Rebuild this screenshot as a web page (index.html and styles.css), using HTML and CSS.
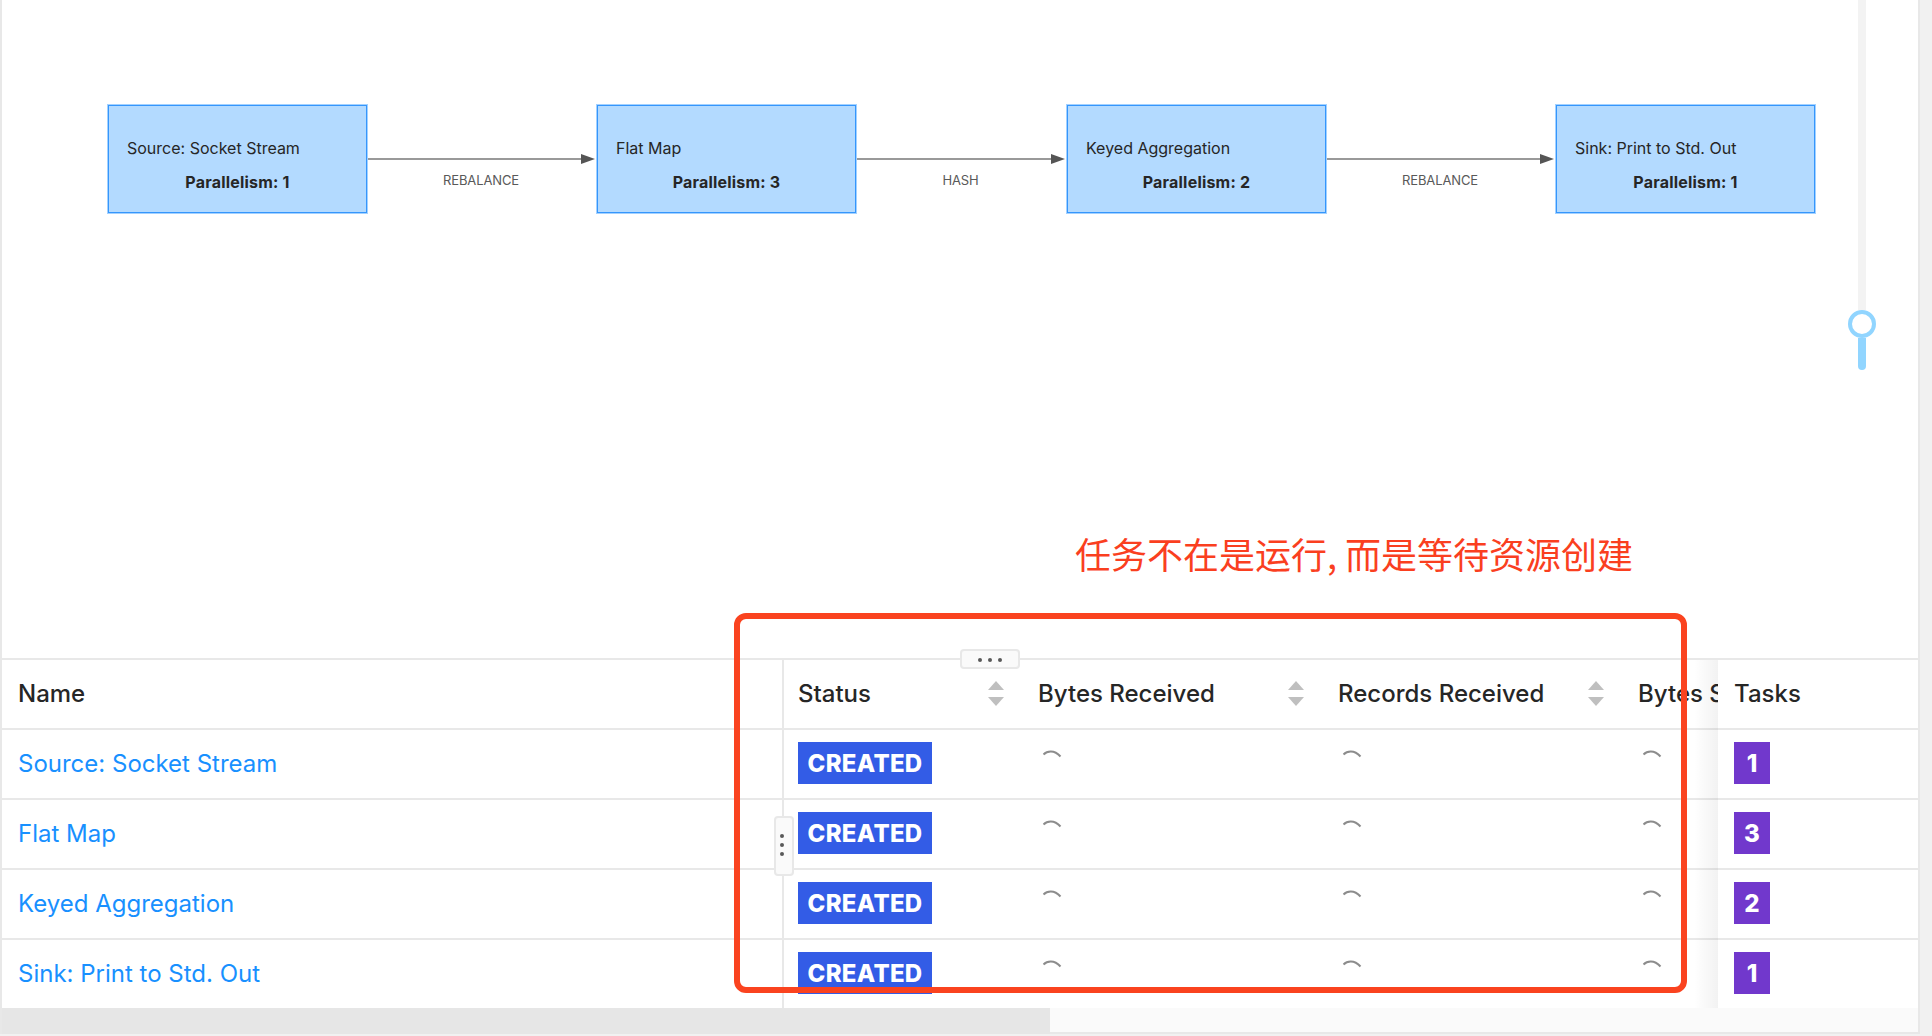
FILE: index.html
```html
<!DOCTYPE html>
<html lang="zh-CN">
<head>
    <meta charset="UTF-8">
    <meta name="viewport" content="width=device-width, initial-scale=1.0">
    <title>Job Overview</title>
    <link rel="stylesheet" href="styles.css">
</head>
<body>
    <div class="panel">
        <div class="graph">
            <div class="node">
                <div class="node-name">Source: Socket Stream</div>
                <div class="node-par">Parallelism: 1</div>
            </div>
            <div class="edge edge-wide">
                <div class="edge-line"><span class="line"></span><span class="arrow"></span></div>
                <div class="edge-label">REBALANCE</div>
            </div>
            <div class="node">
                <div class="node-name">Flat Map</div>
                <div class="node-par">Parallelism: 3</div>
            </div>
            <div class="edge edge-narrow">
                <div class="edge-line"><span class="line"></span><span class="arrow"></span></div>
                <div class="edge-label">HASH</div>
            </div>
            <div class="node">
                <div class="node-name">Keyed Aggregation</div>
                <div class="node-par">Parallelism: 2</div>
            </div>
            <div class="edge edge-wide">
                <div class="edge-line"><span class="line"></span><span class="arrow"></span></div>
                <div class="edge-label">REBALANCE</div>
            </div>
            <div class="node">
                <div class="node-name">Sink: Print to Std. Out</div>
                <div class="node-par">Parallelism: 1</div>
            </div>
        </div>

        <div class="table">
            <div class="row row-head">
                <div class="cell cell-name">Name</div>
                <div class="cell cell-sort">Status<span class="sort"><i class="up"></i><i class="down"></i></span></div>
                <div class="cell cell-sort">Bytes Received<span class="sort"><i class="up"></i><i class="down"></i></span></div>
                <div class="cell cell-sort">Records Received<span class="sort"><i class="up"></i><i class="down"></i></span></div>
                <div class="cell cell-clip">Bytes Sent</div>
                <div class="cell cell-tasks">Tasks</div>
            </div>
            <div class="row">
                <div class="cell cell-name"><a class="link">Source: Socket Stream</a></div>
                <div class="cell cell-badge"><span class="badge-status">CREATED</span></div>
                <div class="cell cell-spin"><svg class="spinner" viewBox="0 0 18 8"><path d="M.5 4.5C4 1 11-.5 17.5 6.5"/></svg></div>
                <div class="cell cell-spin"><svg class="spinner" viewBox="0 0 18 8"><path d="M.5 4.5C4 1 11-.5 17.5 6.5"/></svg></div>
                <div class="cell cell-spin"><svg class="spinner" viewBox="0 0 18 8"><path d="M.5 4.5C4 1 11-.5 17.5 6.5"/></svg></div>
                <div class="cell cell-tasks cell-badge"><span class="badge-tasks">1</span></div>
            </div>
            <div class="row">
                <div class="cell cell-name"><a class="link">Flat Map</a></div>
                <div class="cell cell-badge"><span class="badge-status">CREATED</span></div>
                <div class="cell cell-spin"><svg class="spinner" viewBox="0 0 18 8"><path d="M.5 4.5C4 1 11-.5 17.5 6.5"/></svg></div>
                <div class="cell cell-spin"><svg class="spinner" viewBox="0 0 18 8"><path d="M.5 4.5C4 1 11-.5 17.5 6.5"/></svg></div>
                <div class="cell cell-spin"><svg class="spinner" viewBox="0 0 18 8"><path d="M.5 4.5C4 1 11-.5 17.5 6.5"/></svg></div>
                <div class="cell cell-tasks cell-badge"><span class="badge-tasks">3</span></div>
            </div>
            <div class="row">
                <div class="cell cell-name"><a class="link">Keyed Aggregation</a></div>
                <div class="cell cell-badge"><span class="badge-status">CREATED</span></div>
                <div class="cell cell-spin"><svg class="spinner" viewBox="0 0 18 8"><path d="M.5 4.5C4 1 11-.5 17.5 6.5"/></svg></div>
                <div class="cell cell-spin"><svg class="spinner" viewBox="0 0 18 8"><path d="M.5 4.5C4 1 11-.5 17.5 6.5"/></svg></div>
                <div class="cell cell-spin"><svg class="spinner" viewBox="0 0 18 8"><path d="M.5 4.5C4 1 11-.5 17.5 6.5"/></svg></div>
                <div class="cell cell-tasks cell-badge"><span class="badge-tasks">2</span></div>
            </div>
            <div class="row row-last">
                <div class="cell cell-name"><a class="link">Sink: Print to Std. Out</a></div>
                <div class="cell cell-badge"><span class="badge-status">CREATED</span></div>
                <div class="cell cell-spin"><svg class="spinner" viewBox="0 0 18 8"><path d="M.5 4.5C4 1 11-.5 17.5 6.5"/></svg></div>
                <div class="cell cell-spin"><svg class="spinner" viewBox="0 0 18 8"><path d="M.5 4.5C4 1 11-.5 17.5 6.5"/></svg></div>
                <div class="cell cell-spin"><svg class="spinner" viewBox="0 0 18 8"><path d="M.5 4.5C4 1 11-.5 17.5 6.5"/></svg></div>
                <div class="cell cell-tasks cell-badge"><span class="badge-tasks">1</span></div>
            </div>
        </div>

        <div class="scrollbar"><div class="scrollbar-thumb"></div></div>

        <!-- things that sit on top of the page -->
        <div class="slider">
            <div class="slider-track"></div>
            <div class="slider-handle"></div>
            <div class="slider-rail"></div>
        </div>
        <div class="handle-h"><i></i><i></i><i></i></div>
        <div class="handle-v"><i></i><i></i><i></i></div>
        <div class="note">任务不在是运行, 而是等待资源创建</div>
        <div class="red-box"></div>
    </div>
</body>
</html>
```

FILE: styles.css
```css
html, body {
    margin: 0;
    padding: 0;
    height: 100%;
    overflow: hidden;
}

body {
    font-family: Inter, "Noto Sans CJK SC", sans-serif;
    background-color: #f1f1f1;
    color: #262626;
}

.panel {
    position: relative;
    box-sizing: border-box;
    width: 1920px;
    height: 1034px;
    background: #fff;
    border-left: 2px solid #e8e8e8;
    border-right: 2px solid #e8e8e8;
    border-bottom: 2px solid #e8e8e8;
}

/* job graph */
.graph {
    box-sizing: border-box;
    height: 658px;
    padding: 104px 0 0 105px;
    display: flex;
    align-items: flex-start;
}

.node {
    box-sizing: border-box;
    width: 261px;
    height: 110px;
    flex: none;
    padding: 33px 19px 0;
    background: #b3daff;
    border: 1px solid #a3d1ff;
    box-shadow: inset 0 0 0 1px #3596fc;
    font-size: 16px;
    line-height: 20px;
    color: #262626;
}

.node-par {
    margin-top: 14px;
    text-align: center;
    font-weight: 700;
    letter-spacing: 0.2px;
}

.edge {
    flex: none;
    padding-top: 50px;
}

.edge-wide {
    width: 228px;
}

.edge-narrow {
    width: 209px;
}

.edge-line {
    display: flex;
    align-items: center;
    height: 10px;
}

.line {
    flex: 1;
    height: 2px;
    background: #999;
}

.arrow {
    width: 0;
    height: 0;
    margin-right: 1px;
    border-left: 14px solid #555;
    border-top: 5px solid transparent;
    border-bottom: 5px solid transparent;
}

.edge-label {
    margin-top: 7px;
    padding-right: 2px;
    text-align: center;
    font-size: 13px;
    line-height: 18px;
    letter-spacing: -0.1px;
    color: #595959;
}

/* table */
.row {
    box-sizing: border-box;
    display: grid;
    grid-template-columns: 782px 240px 300px 300px 94px 200px;
    height: 70px;
    border-bottom: 2px solid #e8e8e8;
}

.row-head {
    height: 72px;
    border-top: 2px solid #e8e8e8;
    font-size: 24px;
    font-weight: 500;
    color: #262626;
}

.row-last {
    height: 68px;
    border-bottom: none;
}

.cell {
    box-sizing: border-box;
    display: flex;
    align-items: center;
    padding-left: 14px;
    min-width: 0;
}

.cell-name {
    padding-left: 16px;
    padding-bottom: 2px;
    border-right: 2px solid #e8e8e8;
}

.row-head .cell {
    padding-bottom: 2px;
}

.cell-sort {
    justify-content: space-between;
    padding-right: 20px;
}

.cell-clip {
    overflow: hidden;
    white-space: nowrap;
}

.cell-tasks {
    position: relative;
    padding-left: 16px;
}

.cell-tasks::before {
    content: "";
    position: absolute;
    left: -24px;
    top: 0;
    bottom: -2px;
    width: 24px;
    background: linear-gradient(to right, rgba(0, 0, 0, 0), rgba(0, 0, 0, 0.05));
}

.row-last .cell-tasks::before {
    bottom: 0;
}

.cell-badge {
    align-items: flex-start;
    padding-top: 12px;
}

.cell-spin {
    align-items: flex-start;
    padding: 20px 0 0 19px;
}

.link {
    color: #1890ff;
    font-size: 24px;
}

.badge-status,
.badge-tasks {
    display: flex;
    align-items: center;
    justify-content: center;
    height: 42px;
    color: #fff;
    font-size: 24px;
    font-weight: 800;
}

.badge-status {
    width: 134px;
    background: #335ce6;
    letter-spacing: 0.3px;
}

.badge-tasks {
    width: 36px;
    background: #7138cc;
}

.spinner {
    width: 18px;
    height: 8px;
    overflow: visible;
    fill: none;
    stroke: #8c8c8c;
    stroke-width: 2;
}

.sort {
    display: flex;
    flex-direction: column;
    gap: 7px;
}

.sort i {
    display: block;
    width: 0;
    height: 0;
    border-left: 8px solid transparent;
    border-right: 8px solid transparent;
}

.sort .up {
    border-bottom: 9px solid #bfbfbf;
}

.sort .down {
    border-top: 9px solid #bfbfbf;
}

.scrollbar {
    height: 24px;
    background: #fafafa;
}

.scrollbar-thumb {
    width: 1048px;
    height: 26px;
    background: #e6e6e6;
}

/* overlays */
.slider {
    position: absolute;
    left: 1846px;
    top: 0;
    width: 28px;
    display: flex;
    flex-direction: column;
    align-items: center;
}

.slider-track {
    width: 8px;
    height: 310px;
    background: #f3f3f3;
}

.slider-handle {
    box-sizing: border-box;
    width: 28px;
    height: 28px;
    background: #fff;
    border: 4px solid #91d5ff;
    border-radius: 50%;
}

.slider-rail {
    width: 8px;
    height: 32px;
    background: #91d5ff;
    border-radius: 0 0 4px 4px;
}

.handle-h,
.handle-v {
    position: absolute;
    box-sizing: border-box;
    display: flex;
    align-items: center;
    justify-content: center;
    background: #fafafa;
    border: 2px solid #e8e8e8;
    border-radius: 4px;
}

.handle-h {
    left: 958px;
    top: 649px;
    width: 60px;
    height: 20px;
    gap: 6px;
    padding-top: 2px;
}

.handle-v {
    left: 772px;
    top: 816px;
    width: 20px;
    height: 60px;
    flex-direction: column;
    gap: 5px;
    padding: 0 4px 2px 0;
}

.handle-h i,
.handle-v i {
    width: 4px;
    height: 4px;
    background: #595959;
    border-radius: 50%;
}

.note {
    position: absolute;
    left: 1073px;
    top: 528px;
    font-family: "Noto Sans CJK SC", sans-serif;
    font-size: 36px;
    line-height: 50px;
    font-weight: 400;
    color: #fa3f1f;
    white-space: nowrap;
}

.red-box {
    position: absolute;
    box-sizing: border-box;
    left: 732px;
    top: 613px;
    width: 953px;
    height: 380px;
    border: 6px solid #fa431f;
    border-radius: 12px;
}
```
